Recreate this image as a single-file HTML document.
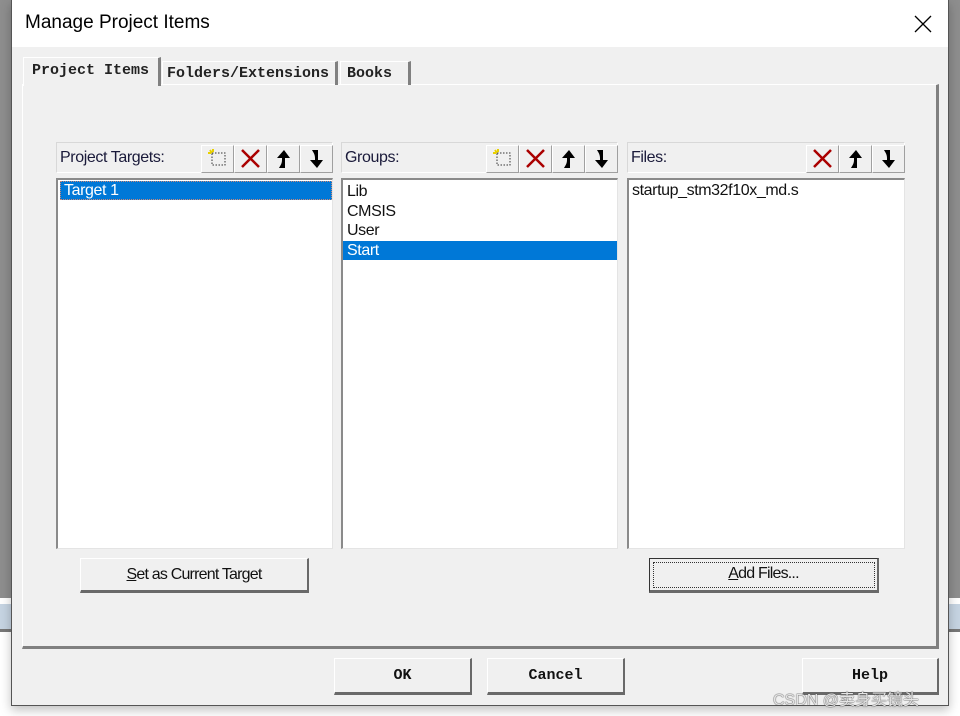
<!DOCTYPE html>
<html><head><style>
*{box-sizing:border-box;margin:0;padding:0}
body{width:960px;height:716px;position:relative;overflow:hidden;background:#fff;font-family:"Liberation Sans",sans-serif}
.a{position:absolute}
.mono{font-family:"Liberation Mono",monospace;font-weight:bold;font-size:15px;color:#222}
.hdr{border:1px solid #d8d8d8;border-right-color:#fff;border-bottom-color:#fff;background:#f0f0f0;font-size:16px;letter-spacing:-0.4px;color:#1a1a3a}
.list{background:#fff;border-top:2px solid #8a8a8a;border-left:2px solid #8a8a8a;border-right:1px solid #e4e4e4;border-bottom:1px solid #e4e4e4;font-size:16px;letter-spacing:-0.4px;color:#111}
.tb{position:absolute;top:2px;width:33px;height:28px;border:1px solid #fff;border-right-color:#a0a0a0;border-bottom-color:#a0a0a0;background:#f0f0f0}
.btn{position:absolute;background:#f0f0f0;border:1px solid #fff;border-right:2px solid #696969;border-bottom:3px solid #696969;text-align:center;font-size:16px;letter-spacing:-0.8px;color:#111}
.sel{background:#0078d7;color:#fff}
</style></head><body>
<div class="a" style="left:0;top:0;width:12px;height:598px;background:#8e8e8e"></div>
<div class="a" style="left:0;top:598px;width:12px;height:34px;background:#c6d4e2;border-top:6px solid #fff;border-bottom:3px solid #777"></div>
<div class="a" style="left:948px;top:0;width:12px;height:598px;background:#8e8e8e"></div>
<div class="a" style="left:948px;top:598px;width:12px;height:34px;background:#c6d4e2;border-top:6px solid #fff;border-bottom:3px solid #777"></div>
<div class="a" style="left:11px;top:0;width:938px;height:706px;background:#f0f0f0;border:1px solid #555;box-shadow:0 4px 10px rgba(0,0,0,.25)"></div>
<div class="a" style="left:12px;top:0;width:936px;height:47px;background:#fff"></div>
<div class="a" style="left:25px;top:12px;font-size:19px;color:#000">Manage Project Items</div>
<svg class="a" style="left:914px;top:15px" width="18" height="18"><path d="M1 1L17 17M17 1L1 17" stroke="#000" stroke-width="1.3"/></svg>
<div class="a" style="left:22px;top:84px;width:917px;height:565px;border:1px solid #fff;border-right:3px solid #808080;border-bottom:3px solid #808080"></div>
<div class="a" style="left:23px;top:57px;width:138px;height:29px;background:#f0f0f0;border:1px solid #fff;border-bottom:none;border-right:3px solid #808080"></div>
<div class="a mono" style="left:32px;top:62px">Project Items</div>
<div class="a" style="left:162px;top:61px;width:176px;height:24px;border:1px solid #fff;border-bottom:none;border-right:3px solid #808080"></div>
<div class="a mono" style="left:167px;top:65px">Folders/Extensions</div>
<div class="a" style="left:340px;top:61px;width:71px;height:24px;border:1px solid #fff;border-bottom:none;border-right:3px solid #808080"></div>
<div class="a mono" style="left:347px;top:65px">Books</div>

<div class="a hdr" style="left:56px;top:142px;width:277px;height:31px"><span class="a" style="left:3px;top:6px">Project Targets:</span>
<div class="tb" style="left:144px"><svg width="31" height="26"><rect x="10" y="7" width="13" height="12" fill="none" stroke="#333" stroke-dasharray="1.5 1.5"/><path d="M8 4l2 3M6 7h3M11 3v3" stroke="#e8d000" stroke-width="2"/></svg></div>
<div class="tb" style="left:177px"><svg width="31" height="26"><path d="M7 4L24 21M24 4L7 21" stroke="#a00" stroke-width="2.5"/></svg></div>
<div class="tb" style="left:210px"><svg width="31" height="26"><path d="M16 4L9 12h5v2c0 4-2 6-3 8h6v-10h5z" fill="#000"/></svg></div>
<div class="tb" style="left:243px"><svg width="31" height="26"><path d="M16 22L9 14h5v-2c0-4-2-6-3-8h6v10h5z" fill="#000"/></svg></div>
</div>
<div class="a list" style="left:56px;top:178px;width:277px;height:371px">
<div class="sel" style="margin:1px 0 0 2px;height:19px;width:272px;padding-left:3px;line-height:17px;border:1px dotted #c87">Target 1</div></div>

<div class="a hdr" style="left:341px;top:142px;width:277px;height:31px"><span class="a" style="left:3px;top:6px">Groups:</span>
<div class="tb" style="left:144px"><svg width="31" height="26"><rect x="10" y="7" width="13" height="12" fill="none" stroke="#333" stroke-dasharray="1.5 1.5"/><path d="M8 4l2 3M6 7h3M11 3v3" stroke="#e8d000" stroke-width="2"/></svg></div>
<div class="tb" style="left:177px"><svg width="31" height="26"><path d="M7 4L24 21M24 4L7 21" stroke="#a00" stroke-width="2.5"/></svg></div>
<div class="tb" style="left:210px"><svg width="31" height="26"><path d="M16 4L9 12h5v2c0 4-2 6-3 8h6v-10h5z" fill="#000"/></svg></div>
<div class="tb" style="left:243px"><svg width="31" height="26"><path d="M16 22L9 14h5v-2c0-4-2-6-3-8h6v10h5z" fill="#000"/></svg></div>
</div>
<div class="a list" style="left:341px;top:178px;width:277px;height:371px;line-height:19.5px;padding-top:2px">
<div style="padding-left:4px">Lib</div><div style="padding-left:4px">CMSIS</div><div style="padding-left:4px">User</div><div class="sel" style="padding-left:4px">Start</div></div>

<div class="a hdr" style="left:627px;top:142px;width:278px;height:31px"><span class="a" style="left:3px;top:6px">Files:</span>
<div class="tb" style="left:178px"><svg width="31" height="26"><path d="M7 4L24 21M24 4L7 21" stroke="#a00" stroke-width="2.5"/></svg></div>
<div class="tb" style="left:211px"><svg width="31" height="26"><path d="M16 4L9 12h5v2c0 4-2 6-3 8h6v-10h5z" fill="#000"/></svg></div>
<div class="tb" style="left:244px"><svg width="31" height="26"><path d="M16 22L9 14h5v-2c0-4-2-6-3-8h6v10h5z" fill="#000"/></svg></div>
</div>
<div class="a list" style="left:627px;top:178px;width:278px;height:371px;padding:2px 0 0 3px">startup_stm32f10x_md.s</div>

<div class="btn" style="left:80px;top:558px;width:229px;height:35px;line-height:31px"><u>S</u>et as Current Target</div>
<div class="btn" style="left:649px;top:558px;width:230px;height:35px;line-height:30px;border-color:#333;border-right-color:#696969;border-bottom-color:#696969"><div style="position:absolute;left:3px;top:3px;right:2px;bottom:2px;border:1px dotted #333"></div><u>A</u>dd Files...</div>

<div class="btn mono" style="left:334px;top:658px;width:138px;height:37px;line-height:34px;font-size:15px;letter-spacing:0">OK</div>
<div class="btn mono" style="left:487px;top:658px;width:138px;height:37px;line-height:34px;font-size:15px;letter-spacing:0">Cancel</div>
<div class="btn mono" style="left:802px;top:658px;width:137px;height:37px;line-height:34px;font-size:15px;letter-spacing:0">Help</div>
<div class="a" style="left:773px;top:686px;font-size:16px;color:rgba(255,255,255,.85);text-shadow:0 0 1px #444,0 0 1px #444;font-family:'Liberation Sans','Noto Sans CJK SC',sans-serif">CSDN @卖身买镜头</div>
</body></html>
